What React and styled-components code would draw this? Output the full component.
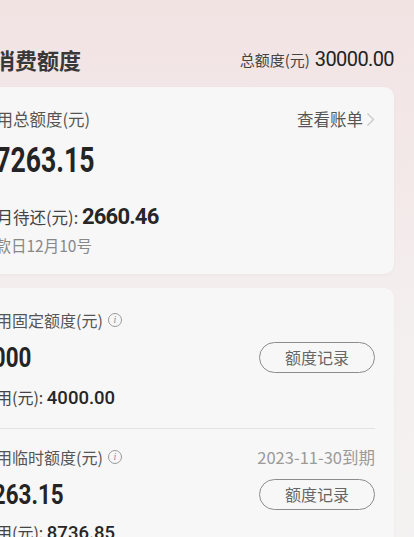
import React from 'react';
import styled, { createGlobalStyle } from 'styled-components';

const GlobalStyle = createGlobalStyle`
  html, body {
    margin: 0;
    padding: 0;
    overflow: hidden;
  }
  body {
    background: linear-gradient(180deg, #f2e3e3 0%, #f3e8e8 160px, #f4efef 320px, #f4f2f2 100%);
    font-family: "Noto Sans CJK SC", "Noto Sans", sans-serif;
    min-height: 537px;
  }
`;

const NUM_FONT = `Roboto, "Noto Sans CJK SC", sans-serif`;

export default function App() {
  return (
    <>
      <GlobalStyle />
      <Page>
        <Header>
          <Title>月消费额度</Title>
          <TotalBox>
            <TotalLabel>总额度(元)</TotalLabel>
            <TotalValue>30000.00</TotalValue>
          </TotalBox>
        </Header>

        <Card>
          <Row>
            <Label>可用总额度(元)</Label>
            <Link>
              查看账单
              <svg width="9" height="15" viewBox="0 0 9 15">
                <polyline points="1.5,1.5 7.5,7.5 1.5,13.5" fill="none" stroke="#c9c9c9" strokeWidth="1.3" />
              </svg>
            </Link>
          </Row>
          <AmountLine $height={40} $top={9}>
            <Amount $size={35} $scale={0.76}>17263.15</Amount>
          </AmountLine>
          <DueLine>
            本月待还(元): <DueValue>2660.46</DueValue>
          </DueLine>
          <Note>还款日12月10号</Note>
        </Card>

        <Card $gapTop>
          <Section>
            <Row>
              <Label $small>
                可用固定额度(元)
                <InfoIcon>i</InfoIcon>
              </Label>
            </Row>
            <AmountRow>
              <Amount $size={28} $scale={0.8}>8000</Amount>
              <RecordButton>额度记录</RecordButton>
            </AmountRow>
            <UsedLine>
              已用(元): <UsedValue>4000.00</UsedValue>
            </UsedLine>
          </Section>
          <Divider />
          <Section>
            <Row>
              <Label $small>
                可用临时额度(元)
                <InfoIcon>i</InfoIcon>
              </Label>
              <Expire>2023-11-30到期</Expire>
            </Row>
            <AmountRow>
              <Amount $size={28} $scale={0.8}>9263.15</Amount>
              <RecordButton>额度记录</RecordButton>
            </AmountRow>
            <UsedLine $tight>
              已用(元): <UsedValue>8736.85</UsedValue>
            </UsedLine>
          </Section>
        </Card>
      </Page>
    </>
  );
}

const Page = styled.div`
  margin-left: -36px;
  padding: 44px 20px 0 0;
`;

const Header = styled.div`
  display: flex;
  justify-content: space-between;
  align-items: center;
  height: 30px;
  margin-bottom: 13px;
`;

const Title = styled.h1`
  margin: 0;
  padding-left: 7px;
  font-size: 22px;
  line-height: 30px;
  font-weight: 700;
  color: #383838;
`;

const TotalBox = styled.div`
  display: flex;
  align-items: baseline;
  gap: 5px;
`;

const TotalLabel = styled.span`
  font-size: 15px;
  color: #444;
`;

const TotalValue = styled.span`
  font-family: ${NUM_FONT};
  font-size: 20px;
  letter-spacing: -0.6px;
  color: #222;
`;

const Card = styled.div`
  background: #f8f7f7;
  border-radius: 10px;
  padding: 20px 19px 18px 16px;
  margin-top: ${(p) => (p.$gapTop ? '14px' : '0')};
  box-shadow: 0 1px 3px rgba(120, 90, 90, 0.05);
`;

const Row = styled.div`
  display: flex;
  justify-content: space-between;
  align-items: center;
  height: 24px;
`;

const Label = styled.div`
  display: flex;
  align-items: center;
  font-size: ${(p) => (p.$small ? '16px' : '16.5px')};
  color: #555;
  white-space: nowrap;
`;

const Link = styled.div`
  display: flex;
  align-items: center;
  gap: 3px;
  font-size: 16.5px;
  color: #555;
`;

const AmountLine = styled.div`
  height: ${(p) => p.$height}px;
  margin-top: ${(p) => p.$top}px;
  display: flex;
  align-items: center;
`;

const Amount = styled.span`
  display: inline-block;
  font-family: ${NUM_FONT};
  font-size: ${(p) => p.$size}px;
  font-weight: 700;
  color: #242424;
  transform: scaleX(${(p) => p.$scale});
  transform-origin: left center;
`;

const DueLine = styled.div`
  margin-top: 24px;
  font-size: 16.5px;
  line-height: 26px;
  color: #444;
`;

const DueValue = styled.span`
  font-family: ${NUM_FONT};
  font-size: 22px;
  letter-spacing: -0.8px;
  font-weight: 700;
  color: #262626;
`;

const Note = styled.div`
  margin-top: 4px;
  font-size: 15.5px;
  line-height: 22px;
  color: #888;
`;

const Section = styled.div`
  padding-bottom: 17px;
  &:last-child {
    padding-top: 16px;
    padding-bottom: 0;
  }
`;

const InfoIcon = styled.span`
  display: inline-flex;
  align-items: center;
  justify-content: center;
  width: 12px;
  height: 12px;
  margin-left: 5px;
  border: 1px solid #9a9a9a;
  border-radius: 50%;
  font-family: "Liberation Serif", serif;
  font-style: italic;
  font-size: 10px;
  line-height: 1;
  color: #8a8a8a;
`;

const Expire = styled.div`
  font-size: 16.5px;
  color: #9a9a9a;
`;

const AmountRow = styled.div`
  display: flex;
  justify-content: space-between;
  align-items: center;
  height: 40px;
  margin-top: 5px;
`;

const RecordButton = styled.button`
  width: 116px;
  height: 31px;
  border: 1px solid #8c8c8c;
  border-radius: 16px;
  background: transparent;
  font-family: "Noto Sans CJK SC", sans-serif;
  font-size: 16px;
  color: #666;
  padding: 0;
`;

const UsedLine = styled.div`
  margin-top: ${(p) => (p.$tight ? '5px' : '7px')};
  font-size: 16px;
  line-height: 26px;
  color: #444;
`;

const UsedValue = styled.span`
  font-family: ${NUM_FONT};
  font-size: 18.5px;
  font-weight: 500;
  color: #262626;
`;

const Divider = styled.div`
  height: 1px;
  background: #e4e2e2;
`;
